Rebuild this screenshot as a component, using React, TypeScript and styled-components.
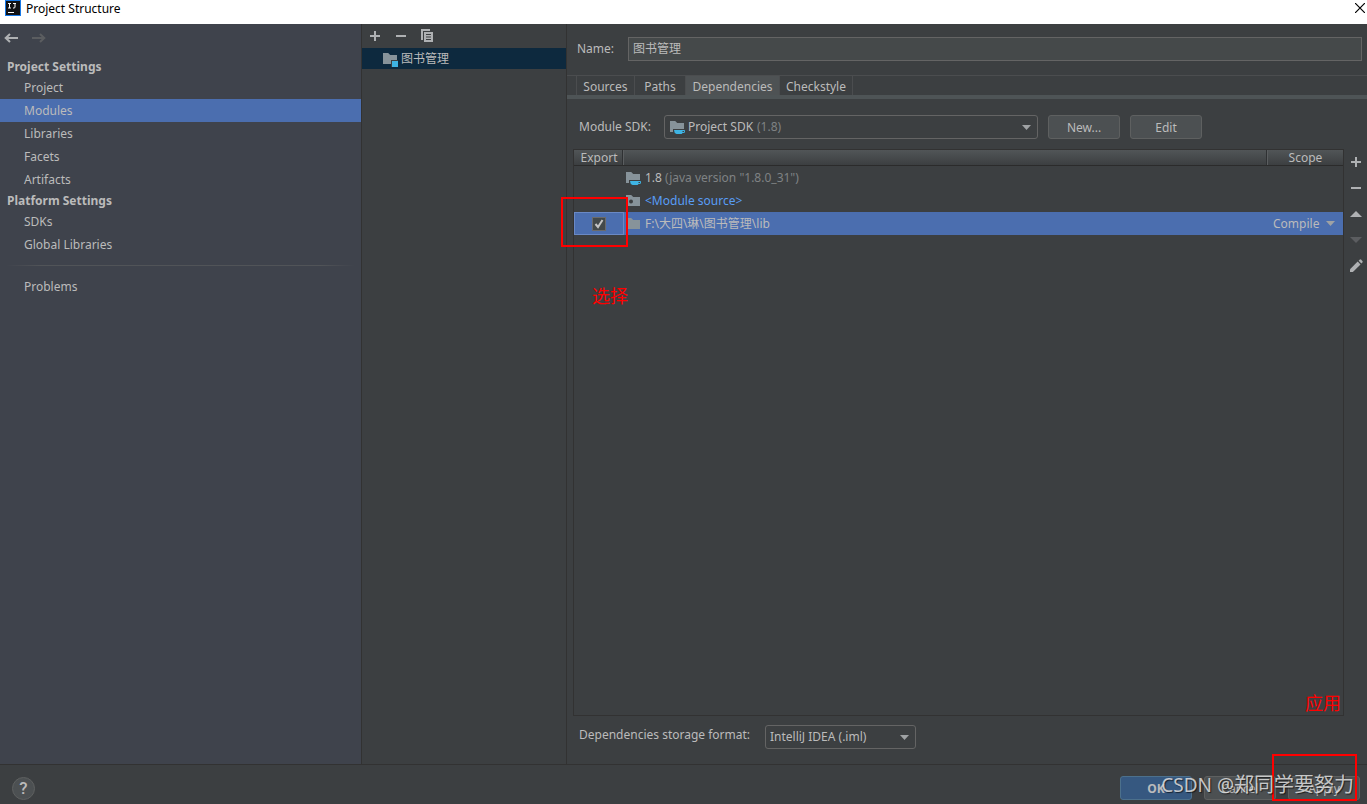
import React from 'react';
import styled, { createGlobalStyle, css } from 'styled-components';

const color = {
  panel: '#3c3f41',
  sidebar: '#3f434c',
  line: '#323232',
  text: '#bbbbbb',
  dim: '#7f8284',
  selection: '#4b6eaf',
  control: '#4c5052',
  controlBorder: '#5e6060',
  fieldBorder: '#646464',
  icon: '#afb1b3',
  caret: '#9fa2a4',
  folder: '#87939a',
  accent: '#3eb4e4',
  mark: '#ff0000',
};

const GlobalStyle = createGlobalStyle`
  *, *::before, *::after { box-sizing: border-box; }
  body {
    margin: 0;
    background: ${color.panel};
    color: ${color.text};
    font: 12px/16px "Noto Sans", "Noto Sans CJK SC", sans-serif;
  }
  button, input, select { font: inherit; color: inherit; margin: 0; }
  svg { display: block; flex: none; }
`;

const Dialog = styled.div`
  min-height: 100vh;
  display: flex;
  flex-direction: column;
`;

const TitleBar = styled.header`
  height: 24px;
  padding: 0 2px 8px 5px;
  display: flex;
  align-items: center;
  gap: 5px;
  background: #ffffff;
  color: #000000;
`;

const Title = styled.h1`
  margin: 0;
  padding-top: 2px;
  flex: 1;
  font-size: 12px;
  font-weight: 400;
`;

const IconButton = styled.button`
  padding: 0;
  border: 0;
  background: none;
  display: grid;
  place-items: center;
  color: ${color.icon};
  &:disabled { color: #5b5d60; }
`;

const Columns = styled.div`
  flex: 1;
  display: grid;
  grid-template-columns: 362px 205px minmax(0, 1fr);
  border-bottom: 1px solid ${color.line};
`;

const Sidebar = styled.nav`
  background: ${color.sidebar};
  border-right: 1px solid ${color.line};
`;

const History = styled.div`
  display: flex;
  gap: 11px;
  height: 33px;
  padding: 6px 4px 11px;
`;

const GroupTitle = styled.h2`
  margin: 0;
  padding-left: 7px;
  font-size: 12px;
  font-weight: 700;
  line-height: 19px;
`;

const NavList = styled.ul`
  margin: 0;
  padding: 0;
  list-style: none;
`;

const NavLink = styled.a<{ $active?: boolean }>`
  display: block;
  padding-left: 24px;
  line-height: 23px;
  color: ${color.text};
  text-decoration: none;
  background: ${(p) => (p.$active ? color.selection : 'transparent')};
`;

const Divider = styled.hr`
  height: 1px;
  margin: 9px 6px;
  border: 0;
  background: linear-gradient(90deg, transparent, #515458 10%, #515458 90%, transparent);
`;

const ModulePane = styled.section`
  border-right: 1px solid ${color.line};
`;

const ModuleTools = styled.div`
  height: 24px;
  padding-left: 5px;
  display: flex;
  gap: 10px;
  align-items: center;
`;

const ModuleItem = styled.a`
  display: flex;
  align-items: center;
  gap: 3px;
  height: 21px;
  padding-left: 20px;
  background: #0d293e;
  color: ${color.text};
  text-decoration: none;
`;

const Editor = styled.main`
  display: flex;
  flex-direction: column;
  min-width: 0;
`;

const NameRow = styled.div`
  display: flex;
  align-items: center;
  padding: 13px 5px 14px 10px;
`;

const NameInput = styled.input`
  flex: 1;
  min-width: 0;
  height: 24px;
  padding: 0 4px 2px;
  background: #45494a;
  border: 1px solid ${color.fieldBorder};
`;

const Tabs = styled.div`
  display: flex;
  height: 24px;
  padding-left: 9px;
  border-top: 1px solid #4b4d4f;
  border-bottom: 4px solid #4e5456;
`;

const Tab = styled.button<{ $width: number; $active?: boolean }>`
  width: ${(p) => p.$width}px;
  padding: 2px 0 0;
  border: 0;
  border-right: 1px solid #4b4d4f;
  background: ${(p) => (p.$active ? '#4e5254' : 'transparent')};
  &:first-child { border-left: 1px solid #4b4d4f; }
`;

const SdkRow = styled.div`
  display: flex;
  align-items: center;
  padding: 16px 12px 10px;
`;

const FieldLabel = styled.label<{ $width: number }>`
  flex: none;
  width: ${(p) => p.$width}px;
`;

const Combo = styled.div<{ $width: number }>`
  display: flex;
  align-items: center;
  gap: 3px;
  width: ${(p) => p.$width}px;
  height: 24px;
  padding: 0 6px 0 4px;
  border: 1px solid ${color.fieldBorder};
  border-radius: 3px;
  & > svg:last-child { margin-left: auto; }
`;

const PlainSelect = styled.select`
  appearance: none;
  padding: 0;
  border: 0;
  background: none;
  option { background: ${color.panel}; }
`;

const Dim = styled.span`
  color: ${color.dim};
`;

const Button = styled.button<{ $primary?: boolean }>`
  width: 72px;
  height: 24px;
  padding: 1px 0 0;
  border: 1px solid ${color.controlBorder};
  border-radius: 3px;
  background: ${color.control};
  ${(p) =>
    p.$primary &&
    css`
      background: #365880;
      border-color: #4c708c;
      font-weight: 700;
    `}
`;

const SdkButtons = styled.div`
  display: flex;
  gap: 10px;
  margin-left: 10px;
`;

const TableArea = styled.div`
  flex: 1;
  display: flex;
  padding-left: 6px;
`;

const TableFrame = styled.div`
  position: relative;
  flex: 1;
  min-width: 0;
  border: 1px solid ${color.line};
`;

const Table = styled.table`
  width: 100%;
  table-layout: fixed;
  border-collapse: separate;
  border-spacing: 0;
`;

const HeadCell = styled.th<{ $width?: number }>`
  width: ${(p) => (p.$width ? `${p.$width}px` : 'auto')};
  height: 16px;
  padding: 0;
  font-weight: 400;
  line-height: 15px;
  background: linear-gradient(#515557, #3c3f41);
  border-bottom: 1px solid #2b2b2b;
  box-shadow: inset -1px 0 #5b5e60, inset -2px 0 #2f3133;
  &:last-child { box-shadow: none; }
`;

const Row = styled.tr<{ $selected?: boolean }>`
  background: ${(p) => (p.$selected ? color.selection : 'transparent')};
`;

const Cell = styled.td<{ $focused?: boolean }>`
  height: 23px;
  padding: 0;
  box-shadow: ${(p) => (p.$focused ? 'inset 0 0 0 1px #6a89c5' : 'none')};
`;

const Entry = styled.div`
  display: flex;
  align-items: center;
  gap: 4px;
  padding-left: 1px;
`;

const SourceLink = styled.a`
  color: #589df6;
  text-decoration: none;
`;

const CheckWrap = styled.label`
  display: grid;
  place-items: center;
  & > * { grid-area: 1 / 1; }
  & > svg { pointer-events: none; visibility: hidden; }
  & > input:checked + svg { visibility: visible; }
`;

const CheckBox = styled.input`
  appearance: none;
  width: 14px;
  height: 14px;
  background: #43494a;
  border: 1px solid #6b6b6b;
`;

const ScopeBox = styled.div`
  display: flex;
  align-items: center;
  justify-content: space-between;
  padding: 0 8px 0 5px;
`;

const SideTools = styled.div`
  width: 23px;
  padding: 5px 0 0;
  display: flex;
  flex-direction: column;
  gap: 10px;
`;

const StorageRow = styled.div`
  display: flex;
  padding: 9px 12px 15px;
  line-height: 20px;
`;

const Footer = styled.footer`
  position: relative;
  display: flex;
  justify-content: space-between;
  align-items: center;
  height: 39px;
  padding: 11px 7px 4px 12px;
`;

const HelpButton = styled.button`
  width: 23px;
  height: 23px;
  padding: 0;
  border: 1px solid ${color.controlBorder};
  border-radius: 50%;
  background: ${color.control};
  font-family: Roboto, sans-serif;
  font-size: 17px;
  font-weight: 500;
`;

const DialogButtons = styled.div`
  display: flex;
  gap: 12px;
`;

const MarkText = styled.span`
  position: absolute;
  color: ${color.mark};
  font-size: 18px;
  line-height: 24px;
`;

const SelectMark = styled(MarkText)`
  left: 18px;
  top: 134px;
`;

const ApplyMark = styled(MarkText)`
  right: 2px;
  bottom: 0;
`;

const MarkBox = styled.div`
  position: absolute;
  border: 2px solid ${color.mark};
  pointer-events: none;
`;

const CheckMarkBox = styled(MarkBox)`
  left: -13px;
  top: 47px;
  width: 67px;
  height: 50px;
`;

const ApplyMarkBox = styled(MarkBox)`
  right: 10px;
  bottom: 3px;
  width: 85px;
  height: 47px;
`;

const Watermark = styled.div`
  position: absolute;
  right: 13px;
  bottom: 5px;
  font-size: 20px;
  line-height: 28px;
  white-space: nowrap;
  color: rgba(225, 225, 225, 0.85);
  text-shadow: 1px 1px 1px rgba(0, 0, 0, 0.6);
  pointer-events: none;
`;

const Latin = styled.span`
  font-size: 19px;
`;

const AppLogo = () => (
  <svg width="16" height="16" viewBox="0 0 16 16">
    <rect width="16" height="16" fill="#1778e6" />
    <rect x="1" y="1" width="14" height="14" fill="#101114" />
    <path d="M3 3.5h3M4.5 3.5v4.5M3 8h3M8 3.5h3M10 3.5v3.5q0 1-1 1H8M3 12.5h6" fill="none" stroke="#fff" strokeWidth="1" />
  </svg>
);

const CloseIcon = () => (
  <svg width="10" height="10" viewBox="0 0 10 10" fill="none" stroke="#000" strokeWidth="1.2">
    <path d="M0 0l10 10M10 0L0 10" />
  </svg>
);

const ArrowIcon = ({ right }: { right?: boolean }) => (
  <svg width="16" height="16" viewBox="0 0 16 16" fill="none" stroke="currentColor" strokeWidth="2">
    <path d={right ? 'M1 8h12M9 4l4.3 4L9 12' : 'M14 8H2M6 4L1.7 8 6 12'} />
  </svg>
);

const PlusIcon = () => (
  <svg width="16" height="16" viewBox="0 0 16 16" fill="currentColor">
    <path d="M3 7h4V3h2v4h4v2H9v4H7V9H3z" />
  </svg>
);

const MinusIcon = () => (
  <svg width="16" height="16" viewBox="0 0 16 16" fill="currentColor">
    <path d="M3 7h10v2H3z" />
  </svg>
);

const CopyIcon = () => (
  <svg width="16" height="16" viewBox="0 0 16 16" fill="currentColor">
    <path d="M2 1h9v2H4v9H2z" />
    <path fillRule="evenodd" d="M5 4h9v10H5zM7 6v1h5V6zM7 8.5v1h5v-1zM7 11v1h5v-1z" />
  </svg>
);

const TriangleIcon = ({ up }: { up?: boolean }) => (
  <svg width="16" height="16" viewBox="0 0 16 16" fill="currentColor">
    <path d={up ? 'M2 11h12L8 5z' : 'M2 5h12l-6 6z'} />
  </svg>
);

const PencilIcon = () => (
  <svg width="16" height="16" viewBox="0 0 16 16" fill="currentColor">
    <path d="M2 11.2L9.7 3.6l2.8 2.8L4.9 14H2z" />
    <path d="M10.6 2.7l1-1q.8-.7 1.6 0l1.2 1.2q.7.8 0 1.6l-1 1z" />
  </svg>
);

const CaretShape = styled.svg`
  color: ${color.caret};
`;

const Caret = () => (
  <CaretShape width="9" height="5" viewBox="0 0 9 5" fill="currentColor">
    <path d="M0 0h9L4.5 5z" />
  </CaretShape>
);

type FolderKind = 'plain' | 'module' | 'sdk' | 'source';

const FolderIcon = ({ kind = 'plain' }: { kind?: FolderKind }) => (
  <svg width="16" height="16" viewBox="0 0 16 16">
    <path d="M1 2h5.2l2 2H15v9H1z" fill={color.folder} />
    {kind === 'module' && (
      <>
        <path d="M9 9h7v7H9z" fill={color.panel} />
        <path d="M10 10h6v6h-6z" fill={color.accent} />
      </>
    )}
    {kind === 'sdk' && (
      <>
        <path d="M4 10h12v6H4z" fill={color.panel} />
        <path d="M5 11h10.5q.5 0 .5 1.5t-1.5 1.5h-1l-.8 1H7.5Q5 14 5 11zM13.5 12v1h1.5v-1z" fill={color.accent} />
      </>
    )}
    {kind === 'source' && <circle cx="6" cy="8.5" r="2" fill={color.panel} />}
  </svg>
);

const CheckIcon = () => (
  <svg width="14" height="14" viewBox="0 0 14 14" fill="none" stroke="#c4c4c4" strokeWidth="2">
    <path d="M3.5 7l2.5 3 4.5-7" />
  </svg>
);

const projectItems = ['Project', 'Modules', 'Libraries', 'Facets', 'Artifacts'];
const platformItems = ['SDKs', 'Global Libraries'];
const tabs = [
  { name: 'Sources', width: 59 },
  { name: 'Paths', width: 51 },
  { name: 'Dependencies', width: 94 },
  { name: 'Checkstyle', width: 73 },
];

const NavGroup = ({ items, active }: { items: string[]; active?: string }) => (
  <NavList>
    {items.map((item) => (
      <li key={item}>
        <NavLink href="#" $active={item === active}>
          {item}
        </NavLink>
      </li>
    ))}
  </NavList>
);

export default function App() {
  return (
    <>
      <GlobalStyle />
      <Dialog>
        <TitleBar>
          <AppLogo />
          <Title>Project Structure</Title>
          <IconButton aria-label="Close">
            <CloseIcon />
          </IconButton>
        </TitleBar>

        <Columns>
          <Sidebar>
            <History>
              <IconButton aria-label="Back">
                <ArrowIcon />
              </IconButton>
              <IconButton aria-label="Forward" disabled>
                <ArrowIcon right />
              </IconButton>
            </History>
            <GroupTitle>Project Settings</GroupTitle>
            <NavGroup items={projectItems} active="Modules" />
            <GroupTitle>Platform Settings</GroupTitle>
            <NavGroup items={platformItems} />
            <Divider />
            <NavGroup items={['Problems']} />
          </Sidebar>

          <ModulePane>
            <ModuleTools>
              <IconButton aria-label="Add module">
                <PlusIcon />
              </IconButton>
              <IconButton aria-label="Remove module">
                <MinusIcon />
              </IconButton>
              <IconButton aria-label="Copy module">
                <CopyIcon />
              </IconButton>
            </ModuleTools>
            <ModuleItem href="#">
              <FolderIcon kind="module" />
              图书管理
            </ModuleItem>
          </ModulePane>

          <Editor>
            <NameRow>
              <FieldLabel htmlFor="module-name" $width={51}>
                Name:
              </FieldLabel>
              <NameInput id="module-name" defaultValue="图书管理" />
            </NameRow>
            <Tabs role="tablist">
              {tabs.map((tab) => (
                <Tab
                  key={tab.name}
                  role="tab"
                  aria-selected={tab.name === 'Dependencies'}
                  $width={tab.width}
                  $active={tab.name === 'Dependencies'}
                >
                  {tab.name}
                </Tab>
              ))}
            </Tabs>

            <SdkRow>
              <FieldLabel htmlFor="module-sdk" $width={85}>
                Module SDK:
              </FieldLabel>
              <Combo $width={374}>
                <FolderIcon kind="sdk" />
                <PlainSelect id="module-sdk">
                  <option>Project SDK</option>
                </PlainSelect>
                <Dim>(1.8)</Dim>
                <Caret />
              </Combo>
              <SdkButtons>
                <Button>New...</Button>
                <Button>Edit</Button>
              </SdkButtons>
            </SdkRow>

            <TableArea>
              <TableFrame>
                <Table>
                  <thead>
                    <tr>
                      <HeadCell $width={50}>Export</HeadCell>
                      <HeadCell aria-label="Dependency" />
                      <HeadCell $width={75}>Scope</HeadCell>
                    </tr>
                  </thead>
                  <tbody>
                    <Row>
                      <Cell />
                      <Cell>
                        <Entry>
                          <FolderIcon kind="sdk" />
                          <span>
                            1.8 <Dim>(java version "1.8.0_31")</Dim>
                          </span>
                        </Entry>
                      </Cell>
                      <Cell />
                    </Row>
                    <Row>
                      <Cell />
                      <Cell>
                        <Entry>
                          <FolderIcon kind="source" />
                          <SourceLink href="#">&lt;Module source&gt;</SourceLink>
                        </Entry>
                      </Cell>
                      <Cell />
                    </Row>
                    <Row $selected>
                      <Cell $focused>
                        <CheckWrap>
                          <CheckBox type="checkbox" defaultChecked aria-label="Export library" />
                          <CheckIcon />
                        </CheckWrap>
                      </Cell>
                      <Cell>
                        <Entry>
                          <FolderIcon />
                          F:\大四\琳\图书管理\lib
                        </Entry>
                      </Cell>
                      <Cell>
                        <ScopeBox>
                          <PlainSelect aria-label="Scope">
                            <option>Compile</option>
                          </PlainSelect>
                          <Caret />
                        </ScopeBox>
                      </Cell>
                    </Row>
                  </tbody>
                </Table>
                <CheckMarkBox />
                <SelectMark>选择</SelectMark>
                <ApplyMark>应用</ApplyMark>
              </TableFrame>
              <SideTools>
                <IconButton aria-label="Add dependency">
                  <PlusIcon />
                </IconButton>
                <IconButton aria-label="Remove dependency">
                  <MinusIcon />
                </IconButton>
                <IconButton aria-label="Move up">
                  <TriangleIcon up />
                </IconButton>
                <IconButton aria-label="Move down" disabled>
                  <TriangleIcon />
                </IconButton>
                <IconButton aria-label="Edit dependency">
                  <PencilIcon />
                </IconButton>
              </SideTools>
            </TableArea>

            <StorageRow>
              <FieldLabel htmlFor="storage-format" $width={186}>
                Dependencies storage format:
              </FieldLabel>
              <Combo $width={151}>
                <PlainSelect id="storage-format">
                  <option>IntelliJ IDEA (.iml)</option>
                </PlainSelect>
                <Caret />
              </Combo>
            </StorageRow>
          </Editor>
        </Columns>

        <Footer>
          <HelpButton aria-label="Help">?</HelpButton>
          <DialogButtons>
            <Button $primary>OK</Button>
            <Button>Cancel</Button>
            <Button>Apply</Button>
          </DialogButtons>
          <ApplyMarkBox />
          <Watermark>
            <Latin>CSDN @</Latin>郑同学要努力
          </Watermark>
        </Footer>
      </Dialog>
    </>
  );
}
